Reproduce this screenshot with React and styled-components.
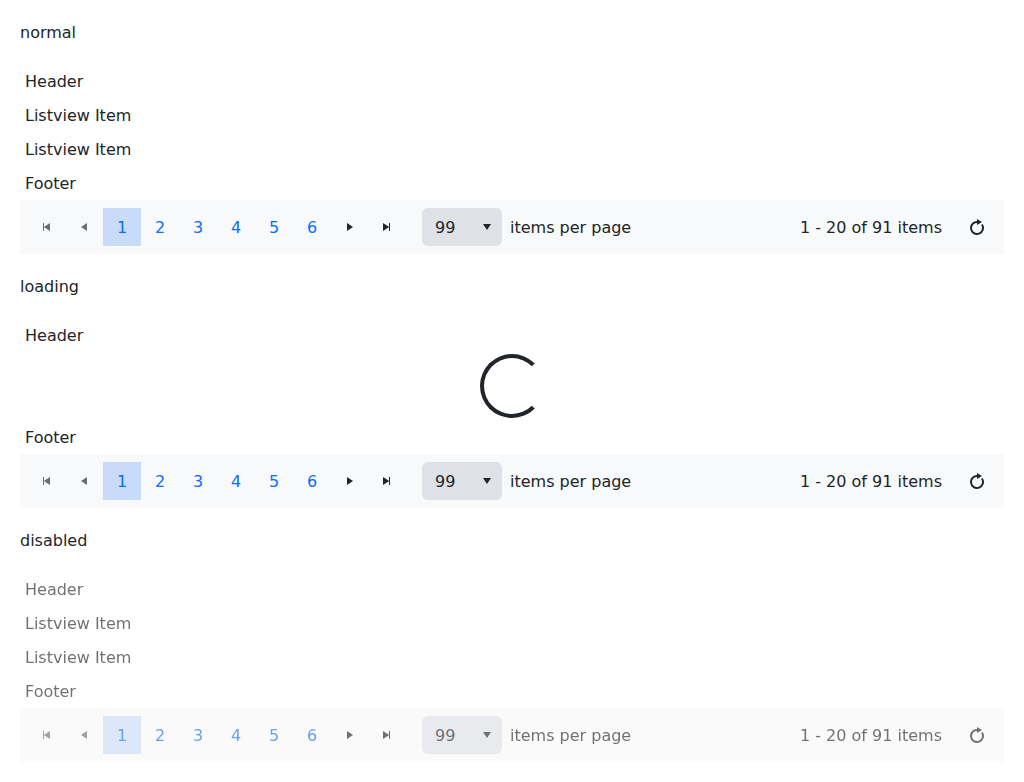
import React from "react";
import styled, { createGlobalStyle, css } from "styled-components";

const GlobalStyle = createGlobalStyle`
  *, *::before, *::after { box-sizing: border-box; }
  body {
    margin: 0;
    background: #fff;
    color: #212529;
    font: 16px/24px "DejaVu Sans", sans-serif;
  }
`;

const Page = styled.main`
  display: grid;
  row-gap: 20px;
  padding: 20px;
`;

const Title = styled.div`
  height: 24px;
  padding-top: 1px;
`;

const ListView = styled.section`
  display: flex;
  flex-direction: column;
  ${(p) => p.$disabled && css`
    opacity: 0.65;
    filter: grayscale(0.1);
  `}
`;

const Row = styled.div`
  padding: 6px 5px 4px;
`;

const LoadingArea = styled.div`
  height: 68px;
  display: flex;
  align-items: center;
  justify-content: center;
`;

const Spinner = styled.div`
  width: 64px;
  height: 64px;
  border: 4px solid currentColor;
  border-right-color: transparent;
  border-radius: 50%;
`;

const PagerBar = styled.nav`
  height: 54px;
  display: flex;
  align-items: center;
  padding: 8px 8px 8px 7px;
  background: ${(p) => (p.$disabled ? "#f7f7f7" : "#f8f9fa")};
`;

const PagerButton = styled.button`
  width: 38px;
  height: 38px;
  display: flex;
  align-items: center;
  justify-content: center;
  padding: 0;
  border: 0;
  font: inherit;
  color: ${(p) => (p.$link ? "#0d6efd" : "inherit")};
  background: ${(p) => (p.$selected ? "#c8dbf9" : "transparent")};
  opacity: ${(p) => (p.disabled ? 0.65 : 1)};
`;

const Label = styled.span`
  padding-top: 2px;
`;

const Icon = styled.svg`
  width: 16px;
  height: 16px;
  fill: currentColor;
`;

const SizePicker = styled.div`
  width: 80px;
  height: 38px;
  display: flex;
  align-items: center;
  justify-content: space-between;
  margin: 0 8px 0 15px;
  padding: 0 7px 0 13px;
  border-radius: 6px;
  background: ${(p) => (p.$disabled ? "#dddfe5" : "#dee1e6")};
`;

const Info = styled(Label)`
  margin-left: auto;
  margin-right: 16px;
`;

const paths = {
  first: "M5 4h1v8H5zM12 4v8L5.8 8z",
  prev: "M11 4v8L5 8z",
  next: "M5 4v8l6-4z",
  last: "M3 4v8l6.2-4zM9 4h1v8H9z",
  down: "M4 5h8l-4 6z",
};

const Glyph = ({ name }) => (
  <Icon viewBox="0 0 16 16" aria-hidden="true">
    <path d={paths[name]} />
  </Icon>
);

const RefreshIcon = () => (
  <Icon viewBox="0 0 16 16" aria-hidden="true">
    <path d="M9 3.05a6 6 0 1 0 3.9 2.45" fill="none" stroke="currentColor" strokeWidth="2" />
    <path d="M8 0l5 3-5 3z" />
  </Icon>
);

const Pager = ({ disabled }) => (
  <PagerBar $disabled={disabled}>
    <PagerButton disabled aria-label="First page"><Glyph name="first" /></PagerButton>
    <PagerButton disabled aria-label="Previous page"><Glyph name="prev" /></PagerButton>
    {[1, 2, 3, 4, 5, 6].map((n) => (
      <PagerButton key={n} $link $selected={n === 1}><Label>{n}</Label></PagerButton>
    ))}
    <PagerButton aria-label="Next page"><Glyph name="next" /></PagerButton>
    <PagerButton aria-label="Last page"><Glyph name="last" /></PagerButton>
    <SizePicker $disabled={disabled}><Label>99</Label><Glyph name="down" /></SizePicker>
    <Label>items per page</Label>
    <Info>1 - 20 of 91 items</Info>
    <PagerButton aria-label="Refresh"><RefreshIcon /></PagerButton>
  </PagerBar>
);

const Example = ({ title, loading, disabled }) => (
  <>
    <Title>{title}</Title>
    <ListView $disabled={disabled}>
      <Row>Header</Row>
      {loading ? (
        <LoadingArea><Spinner /></LoadingArea>
      ) : (
        <>
          <Row>Listview Item</Row>
          <Row>Listview Item</Row>
        </>
      )}
      <Row>Footer</Row>
      <Pager disabled={disabled} />
    </ListView>
  </>
);

export default function App() {
  return (
    <>
      <GlobalStyle />
      <Page>
        <Example title="normal" />
        <Example title="loading" loading />
        <Example title="disabled" disabled />
      </Page>
    </>
  );
}
